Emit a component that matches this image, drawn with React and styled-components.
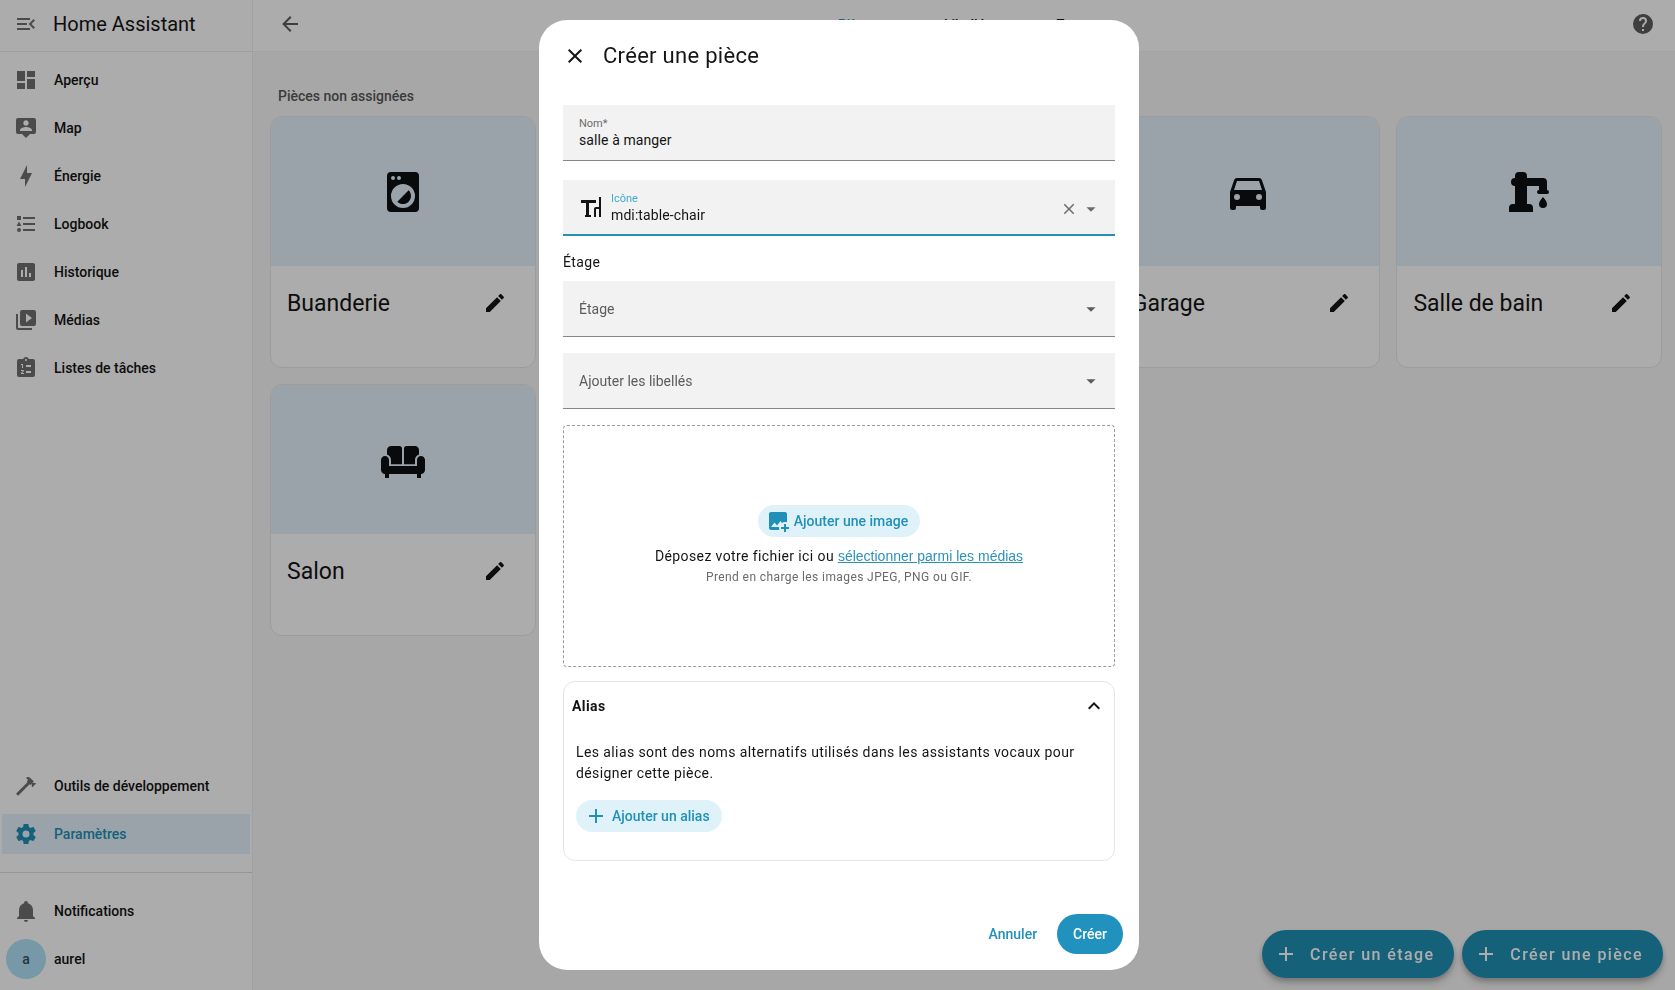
import { useState } from "react";
import styled, { createGlobalStyle } from "styled-components";

const GlobalStyle = createGlobalStyle`
  * {
    box-sizing: border-box;
  }

  body {
    margin: 0;
    background-color: #f7f7f7;
    color: #141414;
    font-family: Roboto, "Noto Sans", sans-serif;
    font-size: 14px;
  }

  button, input, select {
    font-family: inherit;
    font-size: inherit;
    color: inherit;
    border: none;
    background: none;
    padding: 0;
    margin: 0;
  }

  button {
    cursor: pointer;
  }
`;

const icons = {
  menuOpen:
    "M21,15.61L19.59,17L14.58,12L19.59,7L21,8.39L17.44,12L21,15.61M3,6H16V8H3V6M3,13V11H13V13H3M3,18V16H16V18H3Z",
  dashboard: "M13,3V9H21V3M13,21H21V11H13M3,21H11V15H3M3,13H11V3H3V13Z",
  map: "M20,2H4A2,2 0 0,0 2,4V16A2,2 0 0,0 4,18H8L12,22L16,18H20A2,2 0 0,0 22,16V4A2,2 0 0,0 20,2M12,4.3C13.5,4.3 14.7,5.5 14.7,7C14.7,8.5 13.5,9.7 12,9.7C10.5,9.7 9.3,8.5 9.3,7C9.3,5.5 10.5,4.3 12,4.3M18,15H6V14.1C6,12.1 10,11 12,11C14,11 18,12.1 18,14.1V15Z",
  energy: "M11 15H6L13 1V9H18L11 23V15Z",
  logbook:
    "M5,9.5L7.5,14H2.5L5,9.5M3,4H7V8H3V4M5,20A2,2 0 0,0 7,18A2,2 0 0,0 5,16A2,2 0 0,0 3,18A2,2 0 0,0 5,20M9,5V7H21V5H9M9,19H21V17H9V19M9,13H21V11H9V13Z",
  history:
    "M9 17H7V10H9V17M13 17H11V7H13V17M17 17H15V13H17V17M19 3H5C3.9 3 3 3.9 3 5V19C3 20.1 3.9 21 5 21H19C20.1 21 21 20.1 21 19V5C21 3.9 20.1 3 19 3Z",
  media:
    "M4,6H2V20A2,2 0 0,0 4,22H18V20H4V6M20,2H8A2,2 0 0,0 6,4V16A2,2 0 0,0 8,18H20A2,2 0 0,0 22,16V4A2,2 0 0,0 20,2M12,14.5V5.5L18,10L12,14.5Z",
  todo: "M19,3H14.82C14.4,1.84 13.3,1 12,1C10.7,1 9.6,1.84 9.18,3H5A2,2 0 0,0 3,5V19A2,2 0 0,0 5,21H19A2,2 0 0,0 21,19V5A2,2 0 0,0 19,3M7,8H9V12H8V9H7V8M10,17V18H7V17.08L9,15H7V14H9.25A0.75,0.75 0 0,1 10,14.75C10,14.95 9.92,15.14 9.79,15.27L8.12,17H10M11,4A1,1 0 0,1 12,3A1,1 0 0,1 13,4A1,1 0 0,1 12,5A1,1 0 0,1 11,4M17,17H12V15H17V17M17,11H12V9H17V11Z",
  hammer:
    "M2,19.63L13.43,8.2L12.72,7.5L14.14,6.07L12,3.89C13.2,2.7 15.09,2.7 16.27,3.89L19.87,7.5L18.45,8.91H21.29L22,9.62L18.45,13.21L17.74,12.5V9.62L16.27,11.04L15.56,10.33L4.13,21.76L2,19.63Z",
  cog: "M12,15.5A3.5,3.5 0 0,1 8.5,12A3.5,3.5 0 0,1 12,8.5A3.5,3.5 0 0,1 15.5,12A3.5,3.5 0 0,1 12,15.5M19.43,12.97C19.47,12.65 19.5,12.33 19.5,12C19.5,11.67 19.47,11.34 19.43,11L21.54,9.37C21.73,9.22 21.78,8.95 21.66,8.73L19.66,5.27C19.54,5.05 19.27,4.96 19.05,5.05L16.56,6.05C16.04,5.66 15.5,5.32 14.87,5.07L14.5,2.42C14.46,2.18 14.25,2 14,2H10C9.75,2 9.54,2.18 9.5,2.42L9.13,5.07C8.5,5.32 7.96,5.66 7.44,6.05L4.95,5.05C4.73,4.96 4.46,5.05 4.34,5.27L2.34,8.73C2.21,8.95 2.27,9.22 2.46,9.37L4.57,11C4.53,11.34 4.5,11.67 4.5,12C4.5,12.33 4.53,12.65 4.57,12.97L2.46,14.63C2.27,14.78 2.21,15.05 2.34,15.27L4.34,18.73C4.46,18.95 4.73,19.03 4.95,18.95L7.44,17.94C7.96,18.34 8.5,18.68 9.13,18.93L9.5,21.58C9.54,21.82 9.75,22 10,22H14C14.25,22 14.46,21.82 14.5,21.58L14.87,18.93C15.5,18.67 16.04,18.34 16.56,17.94L19.05,18.95C19.27,19.03 19.54,18.95 19.66,18.73L21.66,15.27C21.78,15.05 21.73,14.78 21.54,14.63L19.43,12.97Z",
  bell: "M21,19V20H3V19L5,17V11C5,7.9 7.03,5.17 10,4.29C10,4.19 10,4.1 10,4A2,2 0 0,1 12,2A2,2 0 0,1 14,4C14,4.1 14,4.19 14,4.29C16.97,5.17 19,7.9 19,11V17L21,19M14,21A2,2 0 0,1 12,23A2,2 0 0,1 10,21",
  arrowLeft:
    "M20,11V13H8L13.5,18.5L12.08,19.92L4.16,12L12.08,4.08L13.5,5.5L8,11H20Z",
  help: "M15.07,11.25L14.17,12.17C13.45,12.89 13,13.5 13,15H11V14.5C11,13.39 11.45,12.39 12.17,11.67L13.41,10.41C13.78,10.05 14,9.55 14,9C14,7.89 13.1,7 12,7A2,2 0 0,0 10,9H8A4,4 0 0,1 12,5A4,4 0 0,1 16,9C16,9.88 15.64,10.67 15.07,11.25M13,19H11V17H13M12,2A10,10 0 0,0 2,12A10,10 0 0,0 12,22A10,10 0 0,0 22,12C22,6.47 17.5,2 12,2Z",
  pencil:
    "M20.71,7.04C21.1,6.65 21.1,6 20.71,5.63L18.37,3.29C18,2.9 17.35,2.9 16.96,3.29L15.12,5.12L18.87,8.87M3,17.25V21H6.75L17.81,9.93L14.06,6.18L3,17.25Z",
  washer:
    "M14.83,11.17C16.39,12.73 16.39,15.27 14.83,16.83C13.27,18.39 10.73,18.39 9.17,16.83L14.83,11.17M6,2H18A2,2 0 0,1 20,4V20A2,2 0 0,1 18,22H6A2,2 0 0,1 4,20V4A2,2 0 0,1 6,2M7,4A1,1 0 0,0 6,5A1,1 0 0,0 7,6A1,1 0 0,0 8,5A1,1 0 0,0 7,4M10,4A1,1 0 0,0 9,5A1,1 0 0,0 10,6A1,1 0 0,0 11,5A1,1 0 0,0 10,4M12,8A6,6 0 0,0 6,14A6,6 0 0,0 12,20A6,6 0 0,0 18,14A6,6 0 0,0 12,8Z",
  bed: "M19,7H11V14H3V5H1V20H3V17H21V20H23V11A4,4 0 0,0 19,7M7,13A3,3 0 0,0 10,10A3,3 0 0,0 7,7A3,3 0 0,0 4,10A3,3 0 0,0 7,13Z",
  fridge:
    "M7,2H17A2,2 0 0,1 19,4V9H5V4A2,2 0 0,1 7,2M19,19A2,2 0 0,1 17,21V22H15V21H9V22H7V21A2,2 0 0,1 5,19V10H19V19M8,5V7H10V5H8M8,12V15H10V12H8Z",
  car: "M5,11L6.5,6.5H17.5L19,11M17.5,16A1.5,1.5 0 0,1 16,14.5A1.5,1.5 0 0,1 17.5,13A1.5,1.5 0 0,1 19,14.5A1.5,1.5 0 0,1 17.5,16M6.5,16A1.5,1.5 0 0,1 5,14.5A1.5,1.5 0 0,1 6.5,13A1.5,1.5 0 0,1 8,14.5A1.5,1.5 0 0,1 6.5,16M18.92,6C18.72,5.42 18.16,5 17.5,5H6.5C5.84,5 5.28,5.42 5.08,6L3,12V20A1,1 0 0,0 4,21H5A1,1 0 0,0 6,20V19H18V20A1,1 0 0,0 19,21H20A1,1 0 0,0 21,20V12L18.92,6Z",
  pump: "M19,14.5C19,14.5 21,16.67 21,18A2,2 0 0,1 19,20A2,2 0 0,1 17,18C17,16.67 19,14.5 19,14.5M5,18V9A2,2 0 0,1 3,7A2,2 0 0,1 5,5V4A2,2 0 0,1 7,2H9A2,2 0 0,1 11,4V5H19A2,2 0 0,1 21,7V9L21,11A1,1 0 0,1 22,12A1,1 0 0,1 21,13H17A1,1 0 0,1 16,12A1,1 0 0,1 17,11V9H11V18H12A2,2 0 0,1 14,20V22H2V20A2,2 0 0,1 4,18H5Z",
  sofa: "M23 12V17C23 18.1 22.1 19 21 19V21H19V19H5V21H3V19C1.9 19 1 18.1 1 17V12C1 10.9 1.9 10 3 10S5 10.9 5 12V15H19V12C19 10.9 19.9 10 21 10S23 10.9 23 12M11.5 14.1H6V12C6 10.5 5.1 9.5 4 9.2V7C4 5.9 4.9 5 6 5H10.3C11 5 11.5 5.6 11.5 6.3V14.1M12.5 14.1H18V12C18 10.5 18.9 9.5 20 9.2V7C20 5.9 19.1 5 18 5H13.7C13 5 12.5 5.6 12.5 6.3V14.1Z",
  tableChair:
    "M22 22H20V14H17V22H15V14C15 12.9 15.9 12 17 12H20V2H22V22M2 5V8H7V20H6V22H12V20H10V8H17V5H2Z",
  imagePlus:
    "M18 15V18H15V20H18V23H20V20H23V18H20V15H18M13.3 21H5C3.9 21 3 20.1 3 19V5C3 3.9 3.9 3 5 3H19C20.1 3 21 3.9 21 5V13.3C20.4 13.1 19.7 13 19 13C17.9 13 16.8 13.3 15.9 13.9L14.5 12L11 16.5L8.5 13.5L5 18H13.1C13 18.3 13 18.7 13 19C13 19.7 13.1 20.4 13.3 21Z",
  close:
    "M19,6.41L17.59,5L12,10.59L6.41,5L5,6.41L10.59,12L5,17.59L6.41,19L12,13.41L17.59,19L19,17.59L13.41,12L19,6.41Z",
  plus: "M19,13H13V19H11V13H5V11H11V5H13V11H19V13Z",
  chevronUp: "M7.41,15.41L12,10.83L16.59,15.41L18,14L12,8L6,14L7.41,15.41Z",
  menuDown: "M7,10L12,15L17,10H7Z",
};

const Svg = styled.svg`
  display: block;
  flex: none;
`;

function Icon({ name, size = 24 }) {
  return (
    <Svg
      width={size}
      height={size}
      viewBox="0 0 24 24"
      fill="currentColor"
      fillRule="evenodd"
      aria-hidden="true"
    >
      <path d={icons[name]} />
    </Svg>
  );
}

const Page = styled.div`
  display: grid;
  grid-template-columns: 253px 1fr;
  min-height: 100vh;
`;

const Sidebar = styled.aside`
  display: flex;
  flex-direction: column;
  background-color: #fefefe;
  border-right: 1px solid #eeeeee;
`;

const SidebarHeader = styled.div`
  display: flex;
  align-items: center;
  gap: 15px;
  height: 52px;
  padding: 0 14px 4px;
  border-bottom: 1px solid #e8e8e8;
  font-size: 20px;
`;

const Nav = styled.nav`
  display: flex;
  flex-direction: column;
  gap: 8px;
  padding: 8px 2px;

  &.tools {
    margin-top: auto;
    padding-bottom: 18px;
  }

  &.user {
    border-top: 1px solid #dcdcdc;
    padding-top: 18px;
    padding-bottom: 11px;
  }
`;

const NavItem = styled.a`
  display: flex;
  align-items: center;
  gap: 16px;
  height: 40px;
  padding: 0 12px;
  font-weight: 500;
  text-decoration: none;
  color: ${(props) => (props.$active ? "#2190b4" : "#141414")};
  background-color: ${(props) => (props.$active ? "#e4f1f9" : "transparent")};

  > svg {
    color: ${(props) => (props.$active ? "#2190b4" : "#6f6f6f")};
  }
`;

const Avatar = styled.span`
  display: grid;
  place-items: center;
  width: 40px;
  height: 40px;
  margin: 0 -8px;
  border-radius: 50%;
  background-color: #b0e0f5;
  color: #33505e;
`;

const IconButton = styled.button`
  display: grid;
  place-items: center;
  width: ${(props) => props.$size || 48}px;
  height: ${(props) => props.$size || 48}px;
  color: ${(props) => props.$color || "inherit"};
`;

const Toolbar = styled.header`
  display: flex;
  align-items: center;
  justify-content: space-between;
  height: 52px;
  padding: 0 8px 4px 13px;
  background-color: #fefefe;
  border-bottom: 1px solid #f0f0f0;
`;

const Tabs = styled.nav`
  display: flex;
  padding-top: 2px;

  > a {
    padding: 0 32px;
    font-weight: 500;
    color: #141414;
    text-decoration: none;
  }

  > a.selected {
    color: #2190b4;
  }
`;

const Content = styled.section`
  padding: 36px 13px 0 17px;

  > h2 {
    margin: 0 8px 12px;
    font-size: 14px;
    line-height: 16px;
    font-weight: 500;
    color: #575757;
  }
`;

const AreaGrid = styled.div`
  display: grid;
  grid-template-columns: repeat(auto-fill, minmax(250px, 1fr));
  gap: 16px;
`;

const AreaCard = styled.article`
  height: 252px;
  overflow: hidden;
  border: 1px solid #e6e6e6;
  border-radius: 12px;
  background-color: #fefefe;
`;

const AreaPicture = styled.div`
  display: grid;
  place-items: center;
  height: 149px;
  background-color: #e4f1f9;
  color: #0c0f12;
`;

const AreaTitle = styled.div`
  display: flex;
  align-items: center;
  justify-content: space-between;
  padding: 13px 16px;

  > h3 {
    margin: 0;
    font-size: 23px;
    font-weight: 400;
  }
`;

const Fabs = styled.div`
  position: fixed;
  right: 12px;
  bottom: 12px;
  display: flex;
  gap: 8px;
`;

const Fab = styled.button`
  display: flex;
  align-items: center;
  gap: 12px;
  height: 48px;
  padding: 0 20px 0 12px;
  border-radius: 24px;
  background-color: #2190b4;
  color: #fff;
  font-size: 16px;
  font-weight: 500;
  letter-spacing: 1.4px;
  box-shadow: 0 3px 5px rgba(0, 0, 0, 0.2), 0 6px 10px rgba(0, 0, 0, 0.14);
`;

const Scrim = styled.div`
  position: fixed;
  inset: 0;
  display: flex;
  justify-content: center;
  padding: 20px 0 20px 3px;
  background-color: rgba(0, 0, 0, 0.32);
`;

const Dialog = styled.form`
  display: flex;
  flex-direction: column;
  width: 600px;
  border-radius: 28px;
  background-color: #fff;
`;

const DialogHeader = styled.header`
  display: flex;
  align-items: center;
  gap: 4px;
  height: 71px;
  padding: 0 12px;

  > h1 {
    margin: 0;
    font-size: 22px;
    font-weight: 400;
    letter-spacing: 0.3px;
  }
`;

const DialogBody = styled.div`
  flex: 1;
  overflow-y: auto;
  padding: 14px 24px 0;
`;

const DialogFooter = styled.footer`
  display: flex;
  justify-content: flex-end;
  gap: 8px;
  padding: 0 16px 16px;
`;

const Field = styled.div`
  display: flex;
  align-items: center;
  height: 56px;
  margin-bottom: ${(props) => props.$gap || 16}px;
  padding: 0 13px 0 16px;
  background-color: #f2f2f2;
  border-bottom: ${(props) =>
    props.$focused ? "2px solid #2291b5" : "1px solid #868686"};

  > svg:last-child {
    margin-left: -22px;
    pointer-events: none;
    color: #5c5c5c;
  }

  > button {
    margin-top: 4px;
  }
`;

const FieldText = styled.div`
  display: flex;
  flex: 1;
  flex-direction: column;
  margin-left: ${(props) => (props.$leading ? 8 : 0)}px;
  padding-top: ${(props) => (props.$leading ? 2 : 0)}px;

  > label {
    font-size: 11px;
    line-height: 14px;
    color: ${(props) => (props.$focused ? "#45a9c9" : "#6c6c6c")};
  }

  > input {
    height: 18px;
    outline: none;
    letter-spacing: 0.1px;
  }
`;

const Select = styled.select`
  flex: 1;
  height: 54px;
  appearance: none;
  outline: none;
  color: #5c5c5c;
`;

const FieldHeading = styled.label`
  display: block;
  margin-bottom: 11px;
  line-height: 16px;
  letter-spacing: 0.4px;
`;

const DropZone = styled.div`
  display: flex;
  flex-direction: column;
  align-items: center;
  justify-content: center;
  height: 242px;
  margin-bottom: 14px;
  padding-bottom: 3px;
  border: 1px dashed #9a9a9a;
  border-radius: 4px;
  letter-spacing: 0.4px;

  > p {
    margin: 11px 0 6px;
    line-height: 16px;
  }

  > small {
    font-size: 12px;
    line-height: 14px;
    color: #6a6a6a;
  }
`;

const MediaLink = styled.button`
  font-family: "Liberation Sans", Arial, sans-serif;
  font-size: 14px;
  color: #2b92b5;
  text-decoration: underline;
`;

const TonalButton = styled.button`
  display: flex;
  align-items: center;
  gap: ${(props) => props.$gap}px;
  height: 32px;
  padding: 0 12px 0 8px;
  border-radius: 16px;
  background-color: #dff2fa;
  color: #2190b8;
  font-weight: 500;
`;

const Panel = styled.section`
  height: 180px;
  border: 1px solid #e6e6e6;
  border-radius: 12px;
`;

const PanelHeader = styled.button`
  display: flex;
  align-items: center;
  justify-content: space-between;
  width: 100%;
  height: 48px;
  padding: 0 8px;
  font-weight: 700;
  letter-spacing: 0.4px;
`;

const PanelBody = styled.div`
  padding: 12px;

  > p {
    margin: 0 0 16px;
    line-height: 21px;
    letter-spacing: 0.4px;
  }
`;

const ActionButton = styled.button`
  height: 40px;
  padding: 0 ${(props) => (props.$filled ? 16 : 12)}px;
  border-radius: 20px;
  font-weight: 500;
  color: ${(props) => (props.$filled ? "#fff" : "#2190b8")};
  background-color: ${(props) => (props.$filled ? "#2192bd" : "transparent")};
`;

const mainLinks = [
  { icon: "dashboard", label: "Aperçu" },
  { icon: "map", label: "Map" },
  { icon: "energy", label: "Énergie" },
  { icon: "logbook", label: "Logbook" },
  { icon: "history", label: "Historique" },
  { icon: "media", label: "Médias" },
  { icon: "todo", label: "Listes de tâches" },
];

const areas = [
  { icon: "washer", name: "Buanderie" },
  { icon: "bed", name: "Chambre" },
  { icon: "fridge", name: "Cuisine" },
  { icon: "car", name: "Garage" },
  { icon: "pump", name: "Salle de bain" },
  { icon: "sofa", name: "Salon" },
];

function CreateAreaDialog({ onClose }) {
  const [name, setName] = useState("salle à manger");
  const [icon, setIcon] = useState("mdi:table-chair");
  const [open, setOpen] = useState(true);

  return (
    <Scrim>
      <Dialog
        role="dialog"
        aria-labelledby="dialog-title"
        onSubmit={(e) => e.preventDefault()}
      >
        <DialogHeader>
          <IconButton type="button" aria-label="Fermer" onClick={onClose}>
            <Icon name="close" />
          </IconButton>
          <h1 id="dialog-title">Créer une pièce</h1>
        </DialogHeader>
        <DialogBody>
          <Field $gap={19}>
            <FieldText>
              <label htmlFor="name">Nom*</label>
              <input
                id="name"
                value={name}
                onChange={(e) => setName(e.target.value)}
              />
            </FieldText>
          </Field>
          <Field $focused $gap={18}>
            <Icon name="tableChair" />
            <FieldText $focused $leading>
              <label htmlFor="icon">Icône</label>
              <input
                id="icon"
                value={icon}
                onChange={(e) => setIcon(e.target.value)}
              />
            </FieldText>
            <IconButton
              type="button"
              $size={22}
              $color="#6c6c6c"
              aria-label="Effacer"
              onClick={() => setIcon("")}
            >
              <Icon name="close" size={18} />
            </IconButton>
            <IconButton
              type="button"
              $size={22}
              $color="#6c6c6c"
              aria-label="Ouvrir la liste"
            >
              <Icon name="menuDown" size={22} />
            </IconButton>
          </Field>
          <FieldHeading htmlFor="floor">Étage</FieldHeading>
          <Field>
            <Select id="floor" defaultValue="">
              <option value="">Étage</option>
            </Select>
            <Icon name="menuDown" size={22} />
          </Field>
          <Field>
            <Select aria-label="Ajouter les libellés" defaultValue="">
              <option value="">Ajouter les libellés</option>
            </Select>
            <Icon name="menuDown" size={22} />
          </Field>
          <DropZone>
            <TonalButton type="button" $gap={4}>
              <Icon name="imagePlus" />
              Ajouter une image
            </TonalButton>
            <p>
              Déposez votre fichier ici ou{" "}
              <MediaLink type="button">sélectionner parmi les médias</MediaLink>
            </p>
            <small>Prend en charge les images JPEG, PNG ou GIF.</small>
          </DropZone>
          <Panel>
            <PanelHeader
              type="button"
              aria-expanded={open}
              onClick={() => setOpen(!open)}
            >
              Alias
              <Icon name="chevronUp" />
            </PanelHeader>
            {open && (
              <PanelBody>
                <p>
                  Les alias sont des noms alternatifs utilisés dans les
                  assistants vocaux pour désigner cette pièce.
                </p>
                <TonalButton type="button" $gap={4}>
                  <Icon name="plus" />
                  Ajouter un alias
                </TonalButton>
              </PanelBody>
            )}
          </Panel>
        </DialogBody>
        <DialogFooter>
          <ActionButton type="button" onClick={onClose}>
            Annuler
          </ActionButton>
          <ActionButton type="submit" $filled>
            Créer
          </ActionButton>
        </DialogFooter>
      </Dialog>
    </Scrim>
  );
}

export default function App() {
  const [dialogOpen, setDialogOpen] = useState(true);

  return (
    <>
      <GlobalStyle />
      <Page>
        <Sidebar>
          <SidebarHeader>
            <IconButton $size={24} $color="#6f6f6f" aria-label="Menu">
              <Icon name="menuOpen" />
            </IconButton>
            Home Assistant
          </SidebarHeader>
          <Nav>
            {mainLinks.map((link) => (
              <NavItem href="#" key={link.label}>
                <Icon name={link.icon} />
                {link.label}
              </NavItem>
            ))}
          </Nav>
          <Nav className="tools">
            <NavItem href="#">
              <Icon name="hammer" />
              Outils de développement
            </NavItem>
            <NavItem href="#" $active>
              <Icon name="cog" />
              Paramètres
            </NavItem>
          </Nav>
          <Nav className="user">
            <NavItem href="#">
              <Icon name="bell" />
              Notifications
            </NavItem>
            <NavItem href="#">
              <Avatar>a</Avatar>
              aurel
            </NavItem>
          </Nav>
        </Sidebar>
        <main>
          <Toolbar>
            <IconButton $color="#5c5c5c" aria-label="Retour">
              <Icon name="arrowLeft" />
            </IconButton>
            <Tabs>
              <a href="#" className="selected">
                Pièces
              </a>
              <a href="#">Libellés</a>
              <a href="#">Zones</a>
            </Tabs>
            <IconButton $color="#5c5c5c" aria-label="Aide">
              <Icon name="help" />
            </IconButton>
          </Toolbar>
          <Content>
            <h2>Pièces non assignées</h2>
            <AreaGrid>
              {areas.map((area) => (
                <AreaCard key={area.name}>
                  <AreaPicture>
                    <Icon name={area.icon} size={48} />
                  </AreaPicture>
                  <AreaTitle>
                    <h3>{area.name}</h3>
                    <IconButton aria-label={`Modifier ${area.name}`}>
                      <Icon name="pencil" />
                    </IconButton>
                  </AreaTitle>
                </AreaCard>
              ))}
            </AreaGrid>
          </Content>
        </main>
      </Page>
      <Fabs>
        <Fab>
          <Icon name="plus" />
          Créer un étage
        </Fab>
        <Fab onClick={() => setDialogOpen(true)}>
          <Icon name="plus" />
          Créer une pièce
        </Fab>
      </Fabs>
      {dialogOpen && <CreateAreaDialog onClose={() => setDialogOpen(false)} />}
    </>
  );
}
